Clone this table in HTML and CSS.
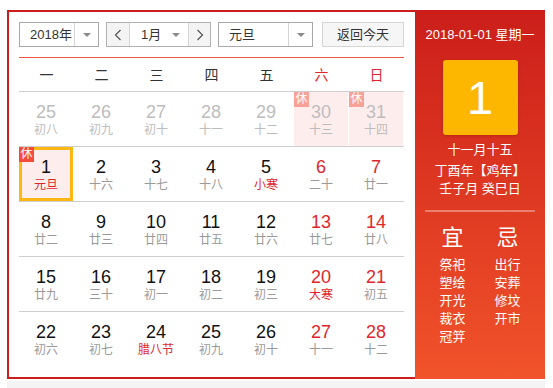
FILE: index.html
```html
<!DOCTYPE html>
<html lang="zh-CN">
<head>
<meta charset="utf-8">
<title>万年历</title>
<link rel="stylesheet" href="styles.css">
</head>
<body>
<div class="wrap">
  <div class="cal">
    <div class="main">
      <div class="toolbar">
        <div class="sel sel-year">
          <span class="txt">2018年</span>
          <span class="arr"><i class="tri"></i></span>
        </div>
        <div class="sel sel-month">
          <span class="nav"><svg width="8" height="12" viewBox="0 0 8 12"><path d="M6.5 1 L1.5 6 L6.5 11" fill="none" stroke="#555" stroke-width="1.2"/></svg></span>
          <span class="mid"><span class="txt">1月</span><i class="tri"></i></span>
          <span class="nav"><svg width="8" height="12" viewBox="0 0 8 12"><path d="M1.5 1 L6.5 6 L1.5 11" fill="none" stroke="#555" stroke-width="1.2"/></svg></span>
        </div>
        <div class="sel sel-hol">
          <span class="txt">元旦</span>
          <span class="arr"><i class="tri"></i></span>
        </div>
        <div class="btn">返回今天</div>
      </div>
      <div class="week">
        <span>一</span><span>二</span><span>三</span><span>四</span><span>五</span><span class="red">六</span><span class="red">日</span>
      </div>
      <div class="days">
        <div class="row">
          <div class="cell other"><b>25</b><em>初八</em></div>
          <div class="cell other"><b>26</b><em>初九</em></div>
          <div class="cell other"><b>27</b><em>初十</em></div>
          <div class="cell other"><b>28</b><em>十一</em></div>
          <div class="cell other"><b>29</b><em>十二</em></div>
          <div class="cell other rest"><span class="badge">休</span><b>30</b><em>十三</em></div>
          <div class="cell other rest"><span class="badge">休</span><b>31</b><em>十四</em></div>
        </div>
        <div class="row">
          <div class="cell sel-day rest"><span class="badge">休</span><b>1</b><em class="hl">元旦</em></div>
          <div class="cell"><b>2</b><em>十六</em></div>
          <div class="cell"><b>3</b><em>十七</em></div>
          <div class="cell"><b>4</b><em>十八</em></div>
          <div class="cell"><b>5</b><em class="hl">小寒</em></div>
          <div class="cell wk"><b>6</b><em>二十</em></div>
          <div class="cell wk"><b>7</b><em>廿一</em></div>
        </div>
        <div class="row">
          <div class="cell"><b>8</b><em>廿二</em></div>
          <div class="cell"><b>9</b><em>廿三</em></div>
          <div class="cell"><b>10</b><em>廿四</em></div>
          <div class="cell"><b>11</b><em>廿五</em></div>
          <div class="cell"><b>12</b><em>廿六</em></div>
          <div class="cell wk"><b>13</b><em>廿七</em></div>
          <div class="cell wk"><b>14</b><em>廿八</em></div>
        </div>
        <div class="row">
          <div class="cell"><b>15</b><em>廿九</em></div>
          <div class="cell"><b>16</b><em>三十</em></div>
          <div class="cell"><b>17</b><em>初一</em></div>
          <div class="cell"><b>18</b><em>初二</em></div>
          <div class="cell"><b>19</b><em>初三</em></div>
          <div class="cell wk"><b>20</b><em class="hl">大寒</em></div>
          <div class="cell wk"><b>21</b><em>初五</em></div>
        </div>
        <div class="row last">
          <div class="cell"><b>22</b><em>初六</em></div>
          <div class="cell"><b>23</b><em>初七</em></div>
          <div class="cell"><b>24</b><em class="hl">腊八节</em></div>
          <div class="cell"><b>25</b><em>初九</em></div>
          <div class="cell"><b>26</b><em>初十</em></div>
          <div class="cell wk"><b>27</b><em>十一</em></div>
          <div class="cell wk"><b>28</b><em>十二</em></div>
        </div>
      </div>
    </div>
    <div class="panel">
      <div class="p-date">2018-01-01 星期一</div>
      <div class="p-day">1</div>
      <div class="p-lunar first">十一月十五</div>
      <div class="p-lunar">丁酉年【鸡年】</div>
      <div class="p-lunar">壬子月 癸巳日</div>
      <div class="p-line"></div>
      <div class="p-yj">
        <div class="col">
          <div class="big">宜</div>
          <div>祭祀</div><div>塑绘</div><div>开光</div><div>裁衣</div><div>冠笄</div>
        </div>
        <div class="col">
          <div class="big">忌</div>
          <div>出行</div><div>安葬</div><div>修坟</div><div>开市</div>
        </div>
      </div>
    </div>
  </div>
  <div class="foot"></div>
</div>
</body>
</html>
```

FILE: styles.css
```css
* { box-sizing: border-box; }
html, body { margin: 0; padding: 0; background: #fff; }
body {
  font-family: "Liberation Sans", "Noto Sans CJK SC", sans-serif;
  color: #333;
  font-size: 13px;
}
.wrap { padding: 10px 0 0 7px; width: 545px; }
.cal { display: flex; height: 369px; }
.main {
  width: 408px;
  border: 2px solid #cc1d1d;
  border-right: 0;
  background: #fff;
  padding: 10px 11px 0 10px;
}
.toolbar { display: flex; height: 25px; }
.sel {
  display: flex;
  border: 1px solid #a9a9a9;
  background: #fff;
  height: 25px;
}
.sel .txt { line-height: 23px; font-size: 13px; color: #333; }
.sel-year { width: 80px; }
.sel-year .txt { width: 54px; padding-left: 10px; }
.arr {
  flex: 1;
  border-left: 1px solid #d4d4d4;
  display: flex;
  align-items: center;
  justify-content: center;
}
.tri {
  display: block;
  width: 0; height: 0;
  border-left: 4px solid transparent;
  border-right: 4px solid transparent;
  border-top: 4px solid #8a8a8a;
}
.sel-month { width: 105px; margin-left: 7px; border-color: #b0b0b0; }
.nav {
  width: 22px;
  background: #f4f4f4;
  display: flex;
  align-items: center;
  justify-content: center;
}
.nav:last-child { flex: 1; }
.mid {
  width: 60px;
  border-left: 1px solid #d4d4d4;
  border-right: 1px solid #d4d4d4;
  display: flex;
  align-items: center;
  padding-left: 11px;
}
.mid .txt { flex: 1; }
.mid .tri { margin-right: 8px; }
.sel-hol { width: 95px; margin-left: 7px; }
.sel-hol .txt { width: 69px; padding-left: 10px; }
.btn {
  margin-left: 9px;
  width: 82px;
  height: 25px;
  border: 1px solid #d6d6d6;
  background: #f6f6f6;
  text-align: center;
  line-height: 23px;
  font-size: 13px;
  color: #333;
}
.week {
  margin-top: 10px;
  border-top: 1px solid #f4533e;
  border-bottom: 1px solid #cfcfcf;
  height: 35px;
  display: grid;
  grid-template-columns: repeat(7, 55px);
  align-items: center;
  font-size: 14px;
  color: #333;
}
.week span { text-align: center; padding-bottom: 1px; }
.week .red { color: #e0262c; }
.row {
  display: grid;
  grid-template-columns: repeat(7, 54px);
  column-gap: 1px;
  height: 55px;
  border-bottom: 1px solid #cfcfcf;
}
.row.last { border-bottom: 0; }
.cell {
  position: relative;
  height: 54px;
  padding-top: 10px;
  text-align: center;
}
.cell b {
  display: block;
  font-weight: normal;
  font-size: 18px;
  line-height: 20px;
  color: #111;
}
.cell em {
  display: block;
  font-style: normal;
  font-size: 12px;
  line-height: 16px;
  color: #9a9a9a;
}
.cell.wk b { color: #e0262c; }
.cell em.hl { color: #e0262c; }
.cell.other b { color: #bdbdbd; }
.cell.other em { color: #bdbdbd; }
.cell.rest { background: #fdeeed; }
.badge {
  position: absolute;
  top: 0; left: 0;
  width: 15px;
  height: 15px;
  background: #f54a3c;
  color: #fff;
  font-size: 12px;
  line-height: 15px;
  text-align: center;
}
.cell.other .badge { background: #f7a199; }
.cell.sel-day {
  border: 3px solid #fcb712;
  padding-top: 7px;
}
.cell.sel-day .badge { top: -3px; left: -3px; }
.panel {
  width: 130px;
  background: linear-gradient(to bottom, #cb1e1a, #f1532a);
  color: #fff;
  display: flex;
  flex-direction: column;
  align-items: center;
  padding-top: 16px;
}
.p-date { font-size: 13px; line-height: 18px; }
.p-day {
  margin-top: 16px;
  width: 75px;
  height: 75px;
  background: #fdb700;
  border-radius: 3px;
  box-shadow: 0 1px 3px rgba(120, 20, 0, .35);
  font-size: 47px;
  line-height: 75px;
  text-align: center;
  color: #fff;
}
.p-lunar { font-size: 13px; line-height: 18px; }
.p-lunar.first { margin-top: 6px; margin-bottom: 3px; }
.p-line {
  margin-top: 12px;
  width: 110px;
  height: 2px;
  background: rgba(255, 255, 255, .35);
}
.p-yj { display: flex; margin-top: 14px; }
.col { width: 55px; text-align: center; font-size: 13px; line-height: 18px; }
.col .big { font-size: 22px; line-height: 24px; margin-bottom: 6px; }
.foot { margin-top: 2px; height: 10px; background: #f4f4f4; }
```
